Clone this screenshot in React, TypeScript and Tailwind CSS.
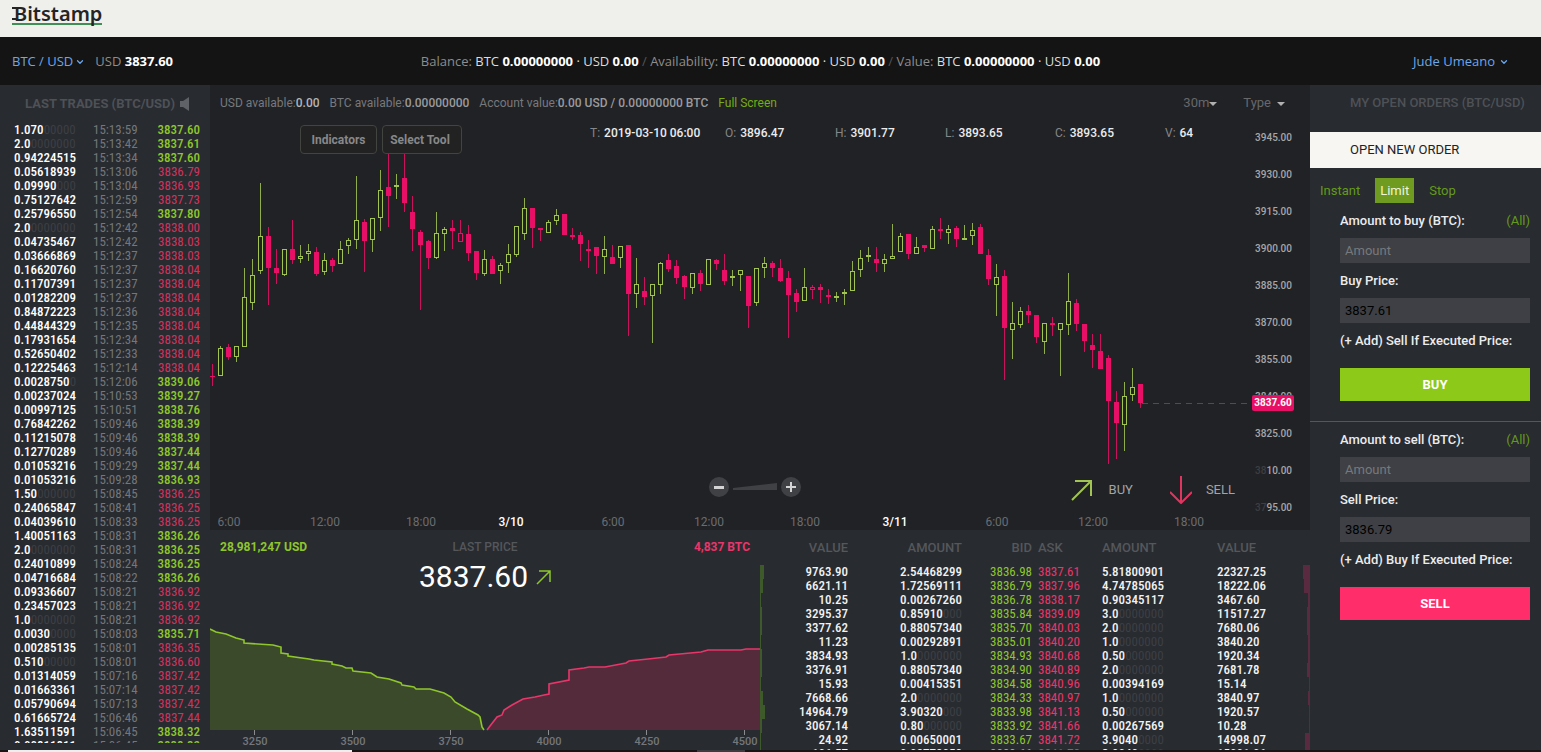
import { ChevronDown } from "lucide-react";

type Side = "g" | "r" | "h";

// [side, high, body top, body bottom, low] - "h" is a hollow falling candle
const candles: [Side, number, number, number, number][] = [
  ["r", 364, 376, 377, 386], ["g", 346, 348, 376, 376], ["r", 344, 347, 357, 360], ["g", 346, 346, 357, 362],
  ["g", 268, 297, 347, 347], ["g", 259, 275, 303, 310], ["g", 183, 236, 271, 274], ["r", 227, 236, 268, 305],
  ["r", 249, 268, 273, 284], ["g", 249, 249, 275, 276], ["r", 220, 249, 260, 264], ["g", 245, 256, 259, 263],
  ["g", 244, 251, 254, 261], ["r", 247, 252, 274, 276], ["g", 253, 260, 272, 275], ["r", 258, 260, 266, 272],
  ["g", 241, 249, 264, 264], ["g", 238, 240, 246, 254], ["g", 176, 220, 240, 249], ["r", 219, 222, 241, 272],
  ["g", 218, 218, 240, 252], ["g", 170, 190, 218, 231], ["r", 154, 187, 196, 227], ["g", 174, 185, 187, 199],
  ["r", 154, 178, 203, 212], ["r", 196, 212, 229, 251], ["r", 230, 232, 245, 310], ["r", 240, 241, 258, 269],
  ["g", 212, 233, 258, 259], ["g", 227, 229, 234, 251], ["r", 220, 228, 231, 249], ["h", 220, 233, 242, 242],
  ["r", 225, 234, 253, 261], ["r", 251, 251, 273, 280], ["g", 250, 259, 274, 276], ["r", 256, 259, 274, 274],
  ["g", 263, 265, 271, 284], ["g", 244, 254, 263, 273], ["g", 226, 226, 255, 257], ["g", 198, 208, 234, 240],
  ["r", 208, 208, 228, 248], ["r", 228, 228, 230, 241], ["g", 220, 222, 233, 233], ["g", 209, 215, 221, 225],
  ["r", 214, 214, 235, 235], ["r", 228, 235, 237, 240], ["r", 232, 235, 244, 261], ["r", 240, 249, 251, 268],
  ["r", 247, 247, 256, 274], ["g", 236, 249, 257, 274], ["r", 245, 257, 264, 264], ["g", 246, 246, 258, 268],
  ["r", 245, 245, 294, 336], ["g", 258, 284, 294, 308], ["r", 277, 291, 297, 305], ["g", 284, 284, 296, 343],
  ["g", 262, 263, 285, 294], ["r", 254, 260, 269, 272], ["r", 260, 266, 278, 284], ["r", 275, 276, 287, 299],
  ["g", 273, 273, 288, 294], ["r", 270, 273, 284, 291], ["g", 259, 259, 285, 285], ["r", 259, 260, 264, 270],
  ["r", 254, 270, 281, 285], ["g", 270, 276, 278, 286], ["g", 270, 270, 275, 291], ["r", 276, 276, 306, 328],
  ["g", 268, 268, 303, 306], ["g", 257, 263, 268, 278], ["r", 261, 263, 268, 277], ["r", 259, 268, 281, 282],
  ["r", 271, 278, 295, 338], ["r", 289, 293, 302, 312], ["g", 268, 287, 301, 301], ["h", 285, 287, 290, 299],
  ["r", 284, 287, 290, 303], ["r", 289, 295, 297, 304], ["g", 292, 296, 298, 302], ["g", 289, 292, 294, 305],
  ["g", 261, 271, 291, 291], ["g", 250, 258, 270, 277], ["g", 247, 255, 257, 262], ["r", 247, 259, 263, 272],
  ["g", 254, 259, 264, 272], ["g", 224, 256, 259, 259], ["g", 233, 236, 252, 252], ["r", 234, 234, 254, 259],
  ["g", 237, 247, 254, 254], ["r", 245, 245, 248, 252], ["g", 226, 229, 249, 249], ["r", 218, 229, 231, 239],
  ["g", 225, 229, 233, 244], ["r", 226, 228, 239, 247], ["g", 225, 238, 240, 240], ["g", 223, 230, 236, 245],
  ["r", 224, 227, 254, 254], ["r", 249, 255, 279, 285], ["g", 264, 277, 285, 316], ["r", 270, 276, 328, 380],
  ["g", 302, 323, 330, 359], ["g", 307, 311, 325, 328], ["r", 305, 311, 315, 323], ["r", 315, 315, 337, 343],
  ["g", 323, 323, 342, 354], ["r", 317, 323, 325, 336], ["g", 323, 323, 330, 376], ["g", 273, 301, 325, 335],
  ["r", 299, 303, 324, 331], ["r", 324, 324, 341, 352], ["r", 334, 345, 350, 368], ["r", 334, 351, 369, 369],
  ["r", 355, 358, 401, 464], ["r", 391, 402, 423, 459], ["g", 382, 396, 425, 451], ["g", 368, 387, 395, 401],
  ["r", 384, 384, 403, 408],
];

// amount, padding zeros, time, price, direction
const trades: [string, string, string, string, Side][] = [
  ["1.070", "00000", "15:13:59", "3837.60", "g"],
  ["2.0", "0000000", "15:13:42", "3837.61", "g"],
  ["0.94224515", "", "15:13:34", "3837.60", "g"],
  ["0.05618939", "", "15:13:06", "3836.79", "r"],
  ["0.09990", "000", "15:13:04", "3836.93", "r"],
  ["0.75127642", "", "15:12:59", "3837.73", "r"],
  ["0.25796550", "", "15:12:54", "3837.80", "g"],
  ["2.0", "0000000", "15:12:42", "3838.00", "r"],
  ["0.04735467", "", "15:12:42", "3838.03", "r"],
  ["0.03666869", "", "15:12:37", "3838.03", "r"],
  ["0.16620760", "", "15:12:37", "3838.04", "r"],
  ["0.11707391", "", "15:12:37", "3838.04", "r"],
  ["0.01282209", "", "15:12:37", "3838.04", "r"],
  ["0.84872223", "", "15:12:36", "3838.04", "r"],
  ["0.44844329", "", "15:12:35", "3838.04", "r"],
  ["0.17931654", "", "15:12:34", "3838.04", "r"],
  ["0.52650402", "", "15:12:33", "3838.04", "r"],
  ["0.12225463", "", "15:12:14", "3838.04", "r"],
  ["0.0028750", "0", "15:12:06", "3839.06", "g"],
  ["0.00237024", "", "15:10:53", "3839.27", "g"],
  ["0.00997125", "", "15:10:51", "3838.76", "g"],
  ["0.76842262", "", "15:09:46", "3838.39", "g"],
  ["0.11215078", "", "15:09:46", "3838.39", "g"],
  ["0.12770289", "", "15:09:46", "3837.44", "g"],
  ["0.01053216", "", "15:09:29", "3837.44", "g"],
  ["0.01053216", "", "15:09:28", "3836.93", "g"],
  ["1.50", "000000", "15:08:45", "3836.25", "r"],
  ["0.24065847", "", "15:08:41", "3836.25", "r"],
  ["0.04039610", "", "15:08:33", "3836.25", "r"],
  ["1.40051163", "", "15:08:31", "3836.26", "g"],
  ["2.0", "0000000", "15:08:31", "3836.25", "g"],
  ["0.24010899", "", "15:08:24", "3836.25", "g"],
  ["0.04716684", "", "15:08:22", "3836.26", "g"],
  ["0.09336607", "", "15:08:21", "3836.92", "r"],
  ["0.23457023", "", "15:08:21", "3836.92", "r"],
  ["1.0", "0000000", "15:08:21", "3836.92", "r"],
  ["0.0030", "0000", "15:08:03", "3835.71", "g"],
  ["0.00285135", "", "15:08:01", "3836.35", "r"],
  ["0.510", "00000", "15:08:01", "3836.60", "r"],
  ["0.01314059", "", "15:07:16", "3837.42", "r"],
  ["0.01663361", "", "15:07:14", "3837.42", "r"],
  ["0.05790694", "", "15:07:13", "3837.42", "r"],
  ["0.61665724", "", "15:06:46", "3837.44", "r"],
  ["1.63511591", "", "15:06:45", "3838.32", "g"],
  ["0.00811811", "", "15:06:45", "3838.32", "g"],
];

type BookRow = {
  bid: [string, string, string, string];
  ask: [string, string, string, string];
  depth: [number, number];
};

// bid: value, amount, zeros, price / ask: price, amount, zeros, value
const book: BookRow[] = [
  { bid: ["9763.90", "2.54468299", "", "3836.98"], ask: ["3837.61", "5.81800901", "", "22327.25"], depth: [4, 7] },
  { bid: ["6621.11", "1.72569111", "", "3836.79"], ask: ["3837.96", "4.74785065", "", "18222.06"], depth: [3, 6] },
  { bid: ["10.25", "0.00267260", "", "3836.78"], ask: ["3838.17", "0.90345117", "", "3467.60"], depth: [1, 2] },
  { bid: ["3295.37", "0.85910", "000", "3835.84"], ask: ["3839.09", "3.0", "0000000", "11517.27"], depth: [2, 3] },
  { bid: ["3377.62", "0.88057340", "", "3835.70"], ask: ["3840.03", "2.0", "0000000", "7680.06"], depth: [2, 3] },
  { bid: ["11.23", "0.00292891", "", "3835.01"], ask: ["3840.20", "1.0", "0000000", "3840.20"], depth: [1, 2] },
  { bid: ["3834.93", "1.0", "0000000", "3834.93"], ask: ["3840.68", "0.50", "000000", "1920.34"], depth: [2, 2] },
  { bid: ["3376.91", "0.88057340", "", "3834.90"], ask: ["3840.89", "2.0", "0000000", "7681.78"], depth: [2, 3] },
  { bid: ["15.93", "0.00415351", "", "3834.58"], ask: ["3840.96", "0.00394169", "", "15.14"], depth: [1, 1] },
  { bid: ["7668.66", "2.0", "0000000", "3834.33"], ask: ["3840.97", "1.0", "0000000", "3840.97"], depth: [3, 2] },
  { bid: ["14964.79", "3.90320", "000", "3833.98"], ask: ["3841.13", "0.50", "000000", "1920.57"], depth: [5, 1] },
  { bid: ["3067.14", "0.80", "000000", "3833.92"], ask: ["3841.66", "0.00267569", "", "10.28"], depth: [2, 1] },
  { bid: ["24.92", "0.00650001", "", "3833.67"], ask: ["3841.72", "3.9040", "0000", "14998.07"], depth: [1, 5] },
  { bid: ["106.57", "0.02778058", "", "3833.66"], ask: ["3841.73", "3.9040", "0000", "15001.06"], depth: [1, 5] },
];

const priceTicks = ["3945.00", "3930.00", "3915.00", "3900.00", "3885.00", "3870.00", "3855.00", "3840.00", "3825.00"];

const timeTicks: [number, string][] = [
  [229, "6:00"], [325, "12:00"], [421, "18:00"], [511, "3/10"], [613, "6:00"], [709, "12:00"],
  [805, "18:00"], [895, "3/11"], [997, "6:00"], [1093, "12:00"], [1189, "18:00"],
];

const ohlc = [
  ["T:", "2019-03-10 06:00", "w-[135px]"],
  ["O:", "3896.47", "w-[110px]"],
  ["H:", "3901.77", "w-[110px]"],
  ["L:", "3893.65", "w-[110px]"],
  ["C:", "3893.65", "w-[110px]"],
  ["V:", "64", "w-[110px]"],
];

const bidDepth =
  "0,9 6,12 16,14 26,18 34,20 34,23 63,25 71,27 71,33 78,34 78,36 99,39 104,40 122,42 122,44 132,46 136,48 142,48 143,51 161,53 167,57 179,59 191,63 192,65 204,67 206,69 220,69 234,73 241,77 245,82 257,89 268,95 270,97 272,107 274,110";
const askDepth =
  "277,110 280,106 287,97 292,95 294,90 302,85 313,79 325,77 334,75 339,74 339,64 359,60 359,50 374,48 379,47 395,47 416,43 419,41 438,39 456,37 459,35 491,32 498,30 531,30 536,29 550,29";

const condensed = "font-['Roboto_Condensed','Roboto',sans-serif]";

function Candle({ side, index, values }: { side: Side; index: number; values: number[] }) {
  const [high, top, bottom, low] = values;
  const x = 212 + index * 8;
  const color = side === "g" ? "#a2c552" : "#e80f66";
  const hollow = side !== "r" && bottom - top > 2;
  return (
    <g fill={color}>
      {top > high && <rect x={x} y={high} width={1} height={top - high} opacity={0.85} />}
      {low > bottom && <rect x={x} y={bottom} width={1} height={low - bottom} opacity={0.85} />}
      {hollow ? (
        <rect x={x - 1.5} y={top + 0.5} width={4} height={bottom - top - 1} fill="none" stroke={color} />
      ) : (
        <rect x={x - 2} y={top} width={5} height={bottom - top} />
      )}
    </g>
  );
}

function TopBar() {
  return (
    <>
      <header className="h-[37px] shrink-0 bg-[#efefeb] px-3 pt-1">
        <a
          href="#home"
          aria-label="Bitstamp"
          className="relative inline-block pl-0.5 font-['Noto_Sans',sans-serif] text-xl leading-5 font-semibold text-[#242424]"
        >
          <span className="absolute inset-x-0 top-[19px] h-0.5 bg-[#3f8f56]" />
          <span className="relative">Bitstamp</span>
          <svg className="absolute left-0 top-0 h-5 w-2" viewBox="0 0 8 20" stroke="#242424" strokeWidth="2">
            <path d="M0 4H5M0 15H5" />
          </svg>
        </a>
      </header>
      <nav className="flex h-12 shrink-0 items-center justify-between bg-[#141414] pl-3 pr-8 pt-0.5 font-['Open_Sans',sans-serif] text-[13px] text-[#8d8d8d]">
        <div className="flex w-[300px] items-center gap-2.5">
          <button className="flex items-center gap-0.5 text-[#6ba6ee]">
            BTC / USD <ChevronDown size={10} strokeWidth={3} />
          </button>
          <span>
            USD <b className="text-white">3837.60</b>
          </span>
        </div>
        <p className="whitespace-nowrap">
          Balance: <span className="text-[#dcdcdc]">BTC <b className="text-white">0.00000000</b> · USD <b className="text-white">0.00</b></span>
          <span className="text-[#555]"> / </span>
          Availability: <span className="text-[#dcdcdc]">BTC <b className="text-white">0.00000000</b> · USD <b className="text-white">0.00</b></span>
          <span className="text-[#555]"> / </span>
          Value: <span className="text-[#dcdcdc]">BTC <b className="text-white">0.00000000</b> · USD <b className="text-white">0.00</b></span>
        </p>
        <div className="flex w-[300px] justify-end">
          <button className="flex items-center gap-1 text-[#6ba6ee]">
            Jude Umeano <ChevronDown size={10} strokeWidth={3} />
          </button>
        </div>
      </nav>
    </>
  );
}

function LastTrades() {
  return (
    <aside className="flex w-[210px] shrink-0 flex-col bg-[#282b30] pb-[7px]">
      <h2 className="flex h-[38px] shrink-0 items-center gap-1 pl-[25px] text-[13px] font-bold text-[#4e5156]">
        LAST TRADES (BTC/USD)
        <svg width="12" height="16" viewBox="0 0 12 16" fill="#5f6266">
          <path d="M1 5h3l6-4v14l-6-4H1z" />
        </svg>
      </h2>
      <div className="min-h-0 flex-1 overflow-hidden">
        <table className={`ml-3.5 w-[186px] text-[13px] leading-[14px] ${condensed}`}>
          <tbody>
            {trades.map(([amount, zeros, time, price, side], i) => (
              <tr key={i} className="h-3.5">
                <td className="w-[79px] p-0 font-medium text-white">
                  {amount}
                  <span className="font-normal text-[#3c3f44]">{zeros}</span>
                </td>
                <td className="p-0 text-[#74777a]">{time}</td>
                <td className={side === "g" ? "p-0 text-right font-medium text-[#8fc62c]" : "p-0 text-right text-[#d1335f]"}>{price}</td>
              </tr>
            ))}
          </tbody>
        </table>
      </div>
    </aside>
  );
}

function PriceChart() {
  return (
    <section className="bg-[#212226]">
      <div className="flex h-9 items-center justify-between pl-2.5 pr-[25px] text-xs text-[#77797c]">
        <div className="flex gap-2.5">
          <span>USD available:<b className="font-medium text-[#b4b5b6]">0.00</b></span>
          <span>BTC available:<b className="font-medium text-[#9a9b9d]">0.00000000</b></span>
          <span>Account value:<b className="font-medium text-[#9a9b9d]">0.00 USD / 0.00000000 BTC</b></span>
          <a href="#full" className="text-[#76ac12]">Full Screen</a>
        </div>
        <div className="flex gap-[26px] text-[13px] text-[#66686b]">
          <button className="flex items-center">
            30m
            <svg width="8" height="5" viewBox="0 0 8 5" fill="#b0b0b0" className="mt-1"><path d="M0 0h8L4 4z" /></svg>
          </button>
          <button className="flex items-center gap-1.5">
            Type
            <svg width="8" height="5" viewBox="0 0 8 5" fill="#b0b0b0" className="mt-1"><path d="M0 0h8L4 4z" /></svg>
          </button>
        </div>
      </div>

      <div className="relative">
        <svg className="block h-auto w-full" viewBox="210 121 1100 409" fontFamily="Roboto, sans-serif">
          {candles.map(([side, ...values], i) => (
            <Candle key={i} side={side} index={i} values={values} />
          ))}
          <path d="M1142 403.5H1252" stroke="#4c4e52" strokeDasharray="6 5" />
          <g fill="#a6a7a9" fontSize="10" fontWeight="500" textAnchor="end">
            {priceTicks.map((tick, i) => (
              <text key={tick} x={1292} y={141 + i * 37}>{tick}</text>
            ))}
            <text x={1292} y={474}><tspan fill="#3c3e42">38</tspan>10.00</text>
            <text x={1292} y={511}><tspan fill="#3c3e42">37</tspan>95.00</text>
          </g>
          <rect x={1252} y={395} width={42} height={16} rx={2} fill="#e80f66" />
          <text x={1273} y={406} fill="#fff" fontSize="10" fontWeight="700" textAnchor="middle">3837.60</text>
          <g fill="#6a6c70" fontSize="12" textAnchor="middle">
            {timeTicks.map(([x, label]) => (
              <text key={x} x={x} y={526} fill={label.includes("/") ? "#fff" : undefined} fontWeight={label.includes("/") ? 500 : 400}>
                {label}
              </text>
            ))}
          </g>
        </svg>

        <div className="absolute left-[90px] top-1 flex gap-[5px] text-xs font-bold text-[#87888a]">
          <button className="h-[29px] w-[77px] rounded-sm border border-[#42443f] bg-[#212221]">Indicators</button>
          <button className="h-[29px] w-20 rounded-sm border border-[#42443f] bg-[#212221] pr-1">Select Tool</button>
        </div>

        <dl className="absolute left-[380px] top-1 flex text-xs">
          {ohlc.map(([label, value, width]) => (
            <div key={label} className={`flex gap-1 ${width}`}>
              <dt className="text-[#85878a]">{label}</dt>
              <dd className="font-medium text-[#ececec]">{value}</dd>
            </div>
          ))}
        </dl>

        <div className="absolute bottom-[33px] left-[499px] flex items-center gap-1">
          <button aria-label="Zoom out" className="flex h-5 w-5 items-center justify-center rounded-full bg-[#404145]">
            <span className="h-[3px] w-2.5 bg-[#d4d4d4]" />
          </button>
          <svg width="44" height="8" viewBox="0 0 44 8" fill="#404145"><path d="M0 5 44 0v7H0z" /></svg>
          <button aria-label="Zoom in" className="flex h-5 w-5 items-center justify-center rounded-full bg-[#404145]">
            <svg width="10" height="10" viewBox="0 0 10 10" stroke="#d4d4d4" strokeWidth="2"><path d="M0 5h10M5 0v10" /></svg>
          </button>
        </div>

        <div className="absolute bottom-[26px] right-[75px] flex h-7 items-center gap-[37px] text-[13px] text-[#a3a4a6]">
          <button className="flex items-center gap-4">
            <svg width="22" height="22" viewBox="0 0 22 22" fill="none" stroke="#a2c552" strokeWidth="2"><path d="M1 21 20 2M4 2h16v15" /></svg>
            BUY
          </button>
          <button className="flex items-center gap-3.5">
            <svg width="22" height="28" viewBox="0 0 22 28" fill="none" stroke="#e0355f" strokeWidth="2"><path d="M11 0v27M0 16l11 11 11-11" /></svg>
            SELL
          </button>
        </div>
      </div>
    </section>
  );
}

function DepthChart() {
  return (
    <section className="flex min-w-0 flex-1 flex-col">
      <div className="grid grid-cols-3 px-2.5 pt-2 text-xs leading-[18px] font-bold">
        <span className="text-[#8fc62c]">28,981,247 USD</span>
        <span className="text-center font-medium text-[#54575b]">LAST PRICE</span>
        <span className="text-right text-[#e8366a]">4,837 BTC</span>
      </div>
      <p className="flex items-center justify-center gap-2 text-3xl leading-[42px] text-white">
        3837.60
        <svg width="15" height="15" viewBox="0 0 15 15" fill="none" stroke="#8fc62c" strokeWidth="1.5"><path d="M1 14 14 1M3 1h11v11" /></svg>
      </p>
      <svg className="mt-[22px] block h-auto w-full" viewBox="0 0 550 130" fontFamily="Roboto, sans-serif">
        <polygon points={`0,110 ${bidDepth}`} fill="#3b4a2b" />
        <polygon points={`${askDepth} 550,110`} fill="#532b3b" />
        <polyline points={bidDepth} fill="none" stroke="#8fc62c" strokeWidth="1.6" />
        <polyline points={askDepth} fill="none" stroke="#e8366a" strokeWidth="1.6" />
        {[3250, 3500, 3750, 4000, 4250, 4500].map((price, i) => (
          <g key={price}>
            <path d={`M${44.5 + i * 98} 110v5`} stroke="#8a8c8f" />
            <text x={45 + i * 98} y={125} textAnchor="middle" fontSize="11" fontWeight="500" fill="#74777a">{price}</text>
          </g>
        ))}
      </svg>
    </section>
  );
}

function OrderBook() {
  return (
    <section className={`min-w-0 flex-1 overflow-hidden ${condensed}`}>
      <table className="w-full table-fixed text-[13px] leading-[14px] font-medium text-[#f2f2f2]">
        <colgroup>
          <col className="w-[6px]" />
          <col className="w-[82px]" />
          <col className="w-[114px]" />
          <col className="w-[76px]" />
          <col className="w-[64px]" />
          <col className="w-[115px]" />
          <col />
          <col className="w-[7px]" />
        </colgroup>
        <thead className="h-[35px] font-['Roboto',sans-serif] text-[#54575b]">
          <tr>
            <td />
            <th className="p-0 text-right font-medium">VALUE</th>
            <th className="p-0 text-right font-medium">AMOUNT</th>
            <th className="p-0 pr-1.5 text-right font-medium">BID</th>
            <th className="p-0 text-left font-medium">ASK</th>
            <th className="p-0 text-left font-medium">AMOUNT</th>
            <th className="p-0 text-left font-medium">VALUE</th>
            <td />
          </tr>
        </thead>
        <tbody>
          {book.map(({ bid, ask, depth }) => (
            <tr key={bid[3]} className="h-3.5">
              <td className="p-0"><div className="h-3.5 bg-[#3f5a2a]" style={{ width: depth[0] }} /></td>
              <td className="p-0 text-right">{bid[0]}</td>
              <td className="p-0 text-right">{bid[1]}<span className="font-normal text-[#3c3f44]">{bid[2]}</span></td>
              <td className="p-0 pr-1.5 text-right font-normal text-[#8fc62c]">{bid[3]}</td>
              <td className="p-0 font-normal text-[#e8366a]">{ask[0]}</td>
              <td className="p-0">{ask[1]}<span className="font-normal text-[#3c3f44]">{ask[2]}</span></td>
              <td className="p-0">{ask[3]}</td>
              <td className="p-0"><div className="ml-auto h-3.5 bg-[#5a2b40]" style={{ width: depth[1] }} /></td>
            </tr>
          ))}
        </tbody>
      </table>
    </section>
  );
}

type FormProps = { id: string; verb: string; other: string; price: string; button: string; className: string };

function OrderForm({ id, verb, other, price, button, className }: FormProps) {
  const field = "block h-[25px] w-full bg-[#3e4045] px-[5px] text-[13px] font-normal text-black outline-none placeholder:text-[#77797c]";
  return (
    <form className="pl-[30px] pr-[11px] text-[13px] leading-[35px] font-medium text-[#ececec]">
      <div className="flex justify-between">
        <label htmlFor={`${id}-amount`}>Amount to {id} (BTC):</label>
        <a href="#all" className="font-normal text-[#649a1a]">(All)</a>
      </div>
      <input id={`${id}-amount`} placeholder="Amount" className={field} />
      <label htmlFor={`${id}-price`} className="block">{verb} Price:</label>
      <input id={`${id}-price`} defaultValue={price} className={field} />
      <a href="#add" className="block whitespace-nowrap">(+ Add) {other} If Executed Price:</a>
      <button type="button" className={`mt-2.5 block h-[33px] w-full text-[13px] leading-[33px] font-bold text-white ${className}`}>
        {button}
      </button>
    </form>
  );
}

function OrderPanel() {
  return (
    <aside className="w-[231px] shrink-0 bg-[#282b30]">
      <h2 className="h-[47px] pl-10 text-[13px] leading-9 font-medium whitespace-nowrap text-[#4e5156]">MY OPEN ORDERS (BTC/USD)</h2>
      <h2 className="h-9 bg-[#f7f6f2] pl-10 text-[13px] leading-9 text-[#222]">OPEN NEW ORDER</h2>
      <div className="flex gap-2.5 px-[5px] pt-2.5 text-[13px] leading-[25px] text-[#649a1a]">
        <button className="px-[5px]">Instant</button>
        <button className="bg-[#6f9c20] px-[5px] text-[#eef5dd]">Limit</button>
        <button className="px-[5px]">Stop</button>
      </div>
      <OrderForm id="buy" verb="Buy" other="Sell" price="3837.61" button="BUY" className="bg-[#8cc919]" />
      <hr className="mt-5 border-[#55585b]" />
      <OrderForm id="sell" verb="Sell" other="Buy" price="3836.79" button="SELL" className="bg-[#ff2d69]" />
    </aside>
  );
}

export default function App() {
  return (
    <div className="flex h-screen flex-col overflow-hidden bg-[#212226] font-['Roboto',sans-serif]">
      <TopBar />
      <main className="flex min-h-0 flex-1">
        <LastTrades />
        <div className="flex min-w-0 flex-1 flex-col">
          <PriceChart />
          <div className="flex min-h-0 flex-1 overflow-hidden bg-[#282b30]">
            <DepthChart />
            <OrderBook />
          </div>
        </div>
        <OrderPanel />
      </main>
      <footer className="flex h-0.5 shrink-0 bg-[#151515]">
        <div className="ml-2 w-[344px] bg-[#eeeeee]" />
        <div className="ml-[345px] w-12 bg-[#3c3d40]" />
      </footer>
    </div>
  );
}
